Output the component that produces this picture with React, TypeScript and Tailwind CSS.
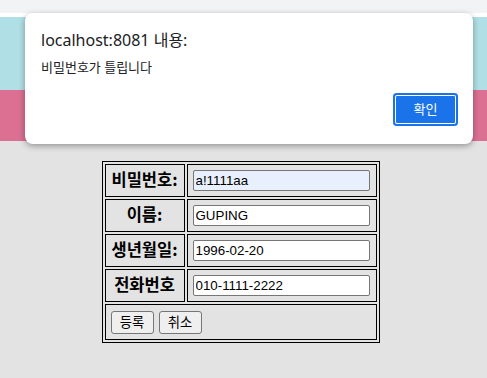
import React from "react";

const ROWS = [
  { label: "비밀번호:", value: "a!1111aa", autofill: true },
  { label: "이름:", value: "GUPING", autofill: false },
  { label: "생년월일:", value: "1996-02-20", autofill: false },
  { label: "전화번호", value: "010-1111-2222", autofill: false },
];

const KR = "font-['Noto_Sans','Noto_Sans_CJK_KR',sans-serif]";

export default function App() {
  return (
    <div className="relative w-[487px] h-[378px] overflow-hidden bg-[#e3e3e3]">
      {/* page bands */}
      <div className="h-[13px] bg-[#f1f3f4]" />
      <div className="h-[4px] bg-white" />
      <div className="h-[73px] bg-[#b0dfe5]" />
      <div className="h-[51px] bg-[#db7093]" />

      {/* form */}
      <div className="flex justify-center pr-[6px] pt-[20px]">
        <table className="border border-black border-separate border-spacing-[2px] font-['Liberation_Sans','Noto_Sans_CJK_KR',sans-serif]">
          <tbody>
            {ROWS.map((r) => (
              <tr key={r.label}>
                <td className="w-[80px] h-[33px] border border-black p-0 text-center align-middle">
                  <span className="font-['Noto_Sans_CJK_KR',sans-serif] font-bold text-[16.5px] leading-none text-black">
                    {r.label}
                  </span>
                </td>
                <td className="w-[190px] h-[33px] border border-black pl-[5px] pr-[6px] py-[5px] align-middle">
                  <input
                    readOnly
                    value={r.value}
                    className={`block w-[177px] h-[21px] border border-[#767676] rounded-[2px] px-[2px] py-[1px] text-[13.33px] text-black outline-none ${
                      r.autofill ? "bg-[#e8f0fe]" : "bg-white"
                    }`}
                  />
                </td>
              </tr>
            ))}
            <tr>
              <td colSpan={2} className="h-[36px] border border-black pl-[5px] py-[5px] align-middle">
                <div className="flex gap-[5px]">
                  <button className="w-[43px] h-[23px] bg-[#efefef] border border-[#767676] rounded-[3px] text-[13.33px] leading-none text-black font-['Noto_Sans_CJK_KR',sans-serif]">
                    등록
                  </button>
                  <button className="w-[43px] h-[23px] bg-[#efefef] border border-[#767676] rounded-[3px] text-[13.33px] leading-none text-black font-['Noto_Sans_CJK_KR',sans-serif]">
                    취소
                  </button>
                </div>
              </td>
            </tr>
          </tbody>
        </table>
      </div>

      {/* alert dialog */}
      <div
        className={`absolute left-[25px] top-[13px] w-[448px] h-[131px] bg-white rounded-[8px] shadow-[0_2px_6px_rgba(0,0,0,0.35)] ${KR}`}
      >
        <div className="pl-[16px] pt-[17px] text-[16px] leading-[20px] text-[#202124]">
          localhost:8081 내용:
        </div>
        <div className="pl-[16px] pt-[9px] text-[13px] leading-[16px] text-[#202124]">
          비밀번호가 틀립니다
        </div>
        <div className="flex justify-end pr-[15px] pt-[18px]">
          <button className="w-[65px] h-[33px] rounded-[4px] bg-[#1a73e8] text-white text-[13px] shadow-[inset_0_0_0_2px_#1a73e8,inset_0_0_0_3px_white]">
            확인
          </button>
        </div>
      </div>
    </div>
  );
}
